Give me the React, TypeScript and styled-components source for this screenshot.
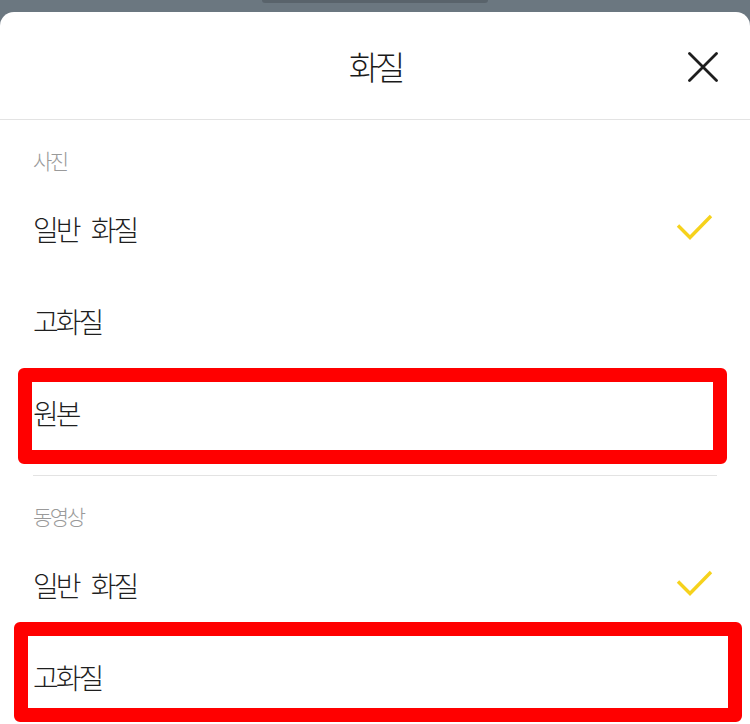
import styled, { createGlobalStyle } from 'styled-components'

const GlobalStyle = createGlobalStyle`
  html, body {
    margin: 0;
    padding: 0;
    background: #6b7780;
  }

  body {
    font-family: 'Noto Sans CJK KR', 'Noto Sans', sans-serif;
    color: #1f1f1f;
  }
`

const Screen = styled.div`
  width: 750px;
  height: 724px;
  overflow: hidden;
  background: #6b7780;
  display: flex;
  flex-direction: column;
  align-items: center;
`

const Handle = styled.div`
  width: 226px;
  height: 3px;
  background: #59636b;
  border-radius: 0 0 14px 14px;
  margin-bottom: 9px;
`

const Sheet = styled.div`
  width: 100%;
  flex: 1;
  background: #ffffff;
  border-radius: 14px 14px 0 0;
  display: flex;
  flex-direction: column;
`

const Header = styled.div`
  height: 107px;
  display: flex;
  align-items: center;
  justify-content: center;
  position: relative;
  border-bottom: 1px solid #e3e3e3;
`

const Title = styled.h1`
  margin: 0;
  font-size: 33px;
  font-weight: 300;
  letter-spacing: -4px;
  color: #1a1a1a;
`

const CloseButton = styled.button`
  position: absolute;
  right: 30px;
  top: 38px;
  width: 34px;
  height: 34px;
  border: 0;
  padding: 0;
  background: none;
  display: flex;
  align-items: center;
  justify-content: center;
`

const Section = styled.section<{ $divided?: boolean }>`
  display: flex;
  flex-direction: column;
  margin: 0 33px;
  border-top: ${({ $divided }) => ($divided ? '1px solid #e3e3e3' : '0')};
  margin-top: ${({ $divided }) => ($divided ? '16px' : '0')};
`

const SectionLabel = styled.div`
  padding: 27px 0 10px;
  line-height: 26px;
  font-size: 21px;
  font-weight: 300;
  letter-spacing: -2.5px;
  color: #9a9a9a;
`

const Item = styled.div`
  position: relative;
  height: 92px;
  display: flex;
  align-items: center;
  justify-content: space-between;
  font-size: 28px;
  font-weight: 300;
  letter-spacing: -3px;
  word-spacing: 9px;
  color: #1f1f1f;
`

type Frame = { top: number; right: number; bottom: number; left: number }

// annotation frame drawn over a row
const Highlight = styled.div<{ $frame: Frame }>`
  position: absolute;
  top: ${({ $frame }) => $frame.top}px;
  right: ${({ $frame }) => $frame.right}px;
  bottom: ${({ $frame }) => $frame.bottom}px;
  left: ${({ $frame }) => $frame.left}px;
  border: 14px solid #ff0000;
  border-radius: 6px;
  pointer-events: none;
`

const Check = () => (
  <svg width="40" height="30" viewBox="0 0 40 30" style={{ marginRight: 2 }}>
    <path d="M3 11.5 L15 23.5 L36 2" fill="none" stroke="#f6d21c" strokeWidth="3.4" />
  </svg>
)

const CloseIcon = () => (
  <svg width="30" height="30" viewBox="0 0 30 30">
    <path d="M1.5 1.5 L28.5 28.5 M28.5 1.5 L1.5 28.5" stroke="#1e1e1e" strokeWidth="2.8" strokeLinecap="round" />
  </svg>
)

type Option = { label: string; checked?: boolean; frame?: Frame }

const photoOptions: Option[] = [
  { label: '일반 화질', checked: true },
  { label: '고화질' },
  { label: '원본', frame: { top: 1, right: -10, bottom: -5, left: -15 } },
]

const videoOptions: Option[] = [
  { label: '일반 화질', checked: true },
  { label: '고화질', frame: { top: -9, right: -25, bottom: 1, left: -19 } },
]

const OptionRow = ({ option }: { option: Option }) => (
  <Item>
    <span>{option.label}</span>
    {option.checked && <Check />}
    {option.frame && <Highlight $frame={option.frame} />}
  </Item>
)

export default function App() {
  return (
    <>
      <GlobalStyle />
      <Screen>
        <Handle />
        <Sheet>
          <Header>
            <Title>화질</Title>
            <CloseButton aria-label="닫기">
              <CloseIcon />
            </CloseButton>
          </Header>

          <Section>
            <SectionLabel>사진</SectionLabel>
            {photoOptions.map((o) => (
              <OptionRow key={o.label} option={o} />
            ))}
          </Section>

          <Section $divided>
            <SectionLabel>동영상</SectionLabel>
            {videoOptions.map((o) => (
              <OptionRow key={o.label} option={o} />
            ))}
          </Section>
        </Sheet>
      </Screen>
    </>
  )
}
